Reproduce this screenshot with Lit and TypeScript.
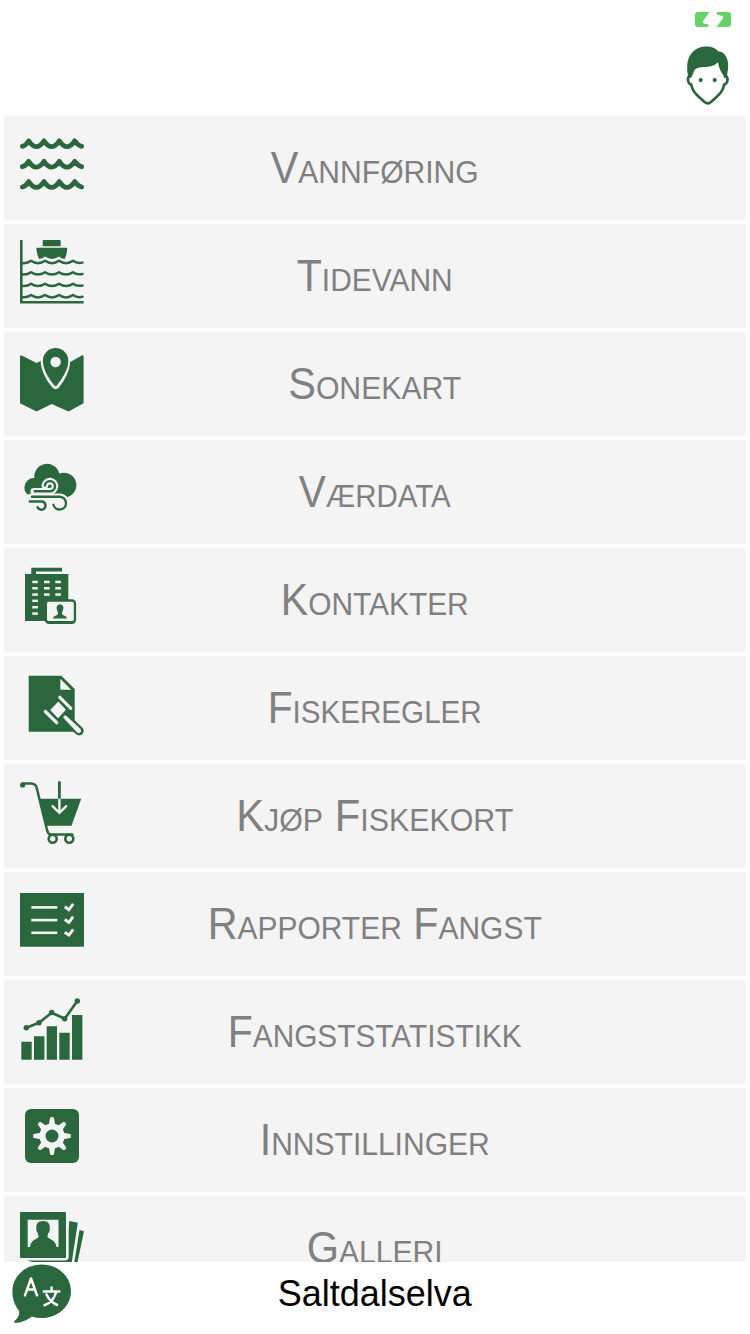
import { LitElement, html, css, svg } from "lit";
import { customElement, property } from "lit/decorators.js";

const wave = (y: number) =>
  svg`<path class="line" stroke-width="4.8" d="M2.4 ${y + 5.4} Q6 ${y + 4.6} 8.7 ${y} Q16.4 ${y + 11.6} 24 ${y} Q31.7 ${y + 11.6} 39.3 ${y} Q47 ${y + 11.6} 54.7 ${y} Q58 ${y + 4.6} 61.6 ${y + 5.4}"/>`;
const ripple = (y: number) =>
  svg`<path class="line" stroke-width="2.5" d="M2 ${y + 2.2} Q7 ${y + 3} 11 ${y} Q18 ${y + 4.8} 25 ${y} Q32 ${y + 4.8} 39 ${y} Q46 ${y + 4.8} 53 ${y} Q57 ${y + 3} 62.5 ${y + 1.8}"/>`;
const windows = [
  ...[16.7, 23, 29.3, 35.6, 42, 48.3].map((y) => [12.3, y]),
  ...[16.7, 23, 29.3].flatMap((y) => [[24, y], [35.3, y]]),
];
const tooth = "M28.8 21 L30.1 13.6 Q32 12.4 33.9 13.6 L35.2 21Z";

const icons: Record<string, unknown> = {
  waves: svg`${[8.9, 29.3, 49.6].map(wave)}`,
  tide: svg`<path d="M0 0H2.6V61H63.7V63.5H0Z"/><rect x="22.7" y="0" width="18" height="6.2" rx="1"/>
    <path d="M17 7.7H46.4Q47.4 7.7 47.2 9C47 13 46 16.5 44.6 19Q41 18.7 39 16.6Q32 21.2 25 16.6Q22.5 18.7 19.2 19Q17 15 16.4 9Q16.2 7.7 17 7.7Z"/>
    ${[20.8, 32.2, 43.7, 55].map(ripple)}`,
  map: svg`<path d="M0 8.7Q0 6.9 1.7 7.6L16.5 15L31.7 7.4L48.5 15L61.8 7.6Q63.6 6.8 63.6 8.4V55.3L48.5 63.4L31.7 56L16.5 63.4L0 55.3Z"/>
    <path class="bg" d="M22 0H50V14C50 22 45 32 38.8 39.5Q35.6 43 32.4 39.5C26 32 20.7 22 20.7 13Z"/>
    <path d="M35.6 0A12.7 12.7 0 0 1 48.3 12.7C48.3 22 42 30.5 37 37.2Q35.6 39 34.2 37.2C29 30.5 22.9 22 22.9 12.7A12.7 12.7 0 0 1 35.6 0Z"/><circle class="bg" cx="35.6" cy="14" r="5.2"/>`,
  weather: svg`<path d="M13.3 41A9.5 9.5 0 1 1 14.4 22A12.7 12.7 0 0 1 39.4 17.7A12.2 12.2 0 1 1 48.6 40.6L43 43H13Z"/>
    <path class="cut" stroke-width="6.6" d="M13.8 35.3H29.6A5.1 5.1 0 1 0 24.8 29.6"/>
    <path class="cut" stroke-width="6.6" d="M11 40.7H40A6.4 6.4 0 1 1 33.4 48.8"/>
    <path class="line" stroke-width="2.4" d="M14.7 35.3H29.6A5.1 5.1 0 1 0 24.9 29.5"/>
    <path class="line" stroke-width="2.4" d="M12 40.7H40A6.4 6.4 0 1 1 33.4 48.8M9.8 45.5H21.2A4.1 4.1 0 1 1 17.6 51.2"/>`,
  contacts: svg`<path d="M5 10H11.3V3.8H42V7.6H16V10H48.3V57H5Z"/>
    ${windows.map(([x, y]) => svg`<rect class="bg" x=${x} y=${y} width="5.6" height="2.5"/>`)}
    <rect x="24.7" y="35.3" width="31.4" height="24.6" rx="4.2"/><rect class="bg" x="27" y="37.7" width="26.8" height="19.4" rx="1.6"/>
    <path d="M40 40.5C43.2 40.5 44 43 43 46C42.6 47.4 42 48.2 42 50C43 51.8 46.5 51.6 47 54.6H33C33.5 51.6 37 51.8 38 50C38 48.2 37.4 47.4 37 46C36 43 36.8 40.5 40 40.5Z"/>`,
  rules: svg`<path d="M8.7 3.7H41.3L54.7 17V59.7H8.7Z"/><path class="bg" d="M40.3 6.8L51.2 17.8H40.3Z"/>
    <path class="line" stroke-width="9.2" d="M52 52L59.1 58.8"/><path class="bg" d="M38.3 29.5L46 37.7L38 46.2L30.2 38Z"/>
    <path class="cut" stroke-width="3.2" d="M39.8 25.3L50.8 36.4M25.3 39.5L36.7 50.7"/>
    <path class="bg" d="M43.3 45.8Q43.3 43.2 45.9 43.6L60.4 56.8Q62 59 60.3 60.5Q58.4 61.9 56.7 60.1Z"/>`,
  cart: svg`<path d="M20 18.7H61.2L51.5 45.7H26.6Z"/><circle cx="2.6" cy="5" r="2.6"/>
    <path class="line" stroke-width="2.5" d="M2.5 3.6H11.5Q15.7 3.8 16.8 8.2L26.7 48.5Q27.6 54.5 31 54.5H52.3"/>
    <circle class="ring" cx="32.7" cy="58.7" r="4"/><circle class="ring" cx="49.3" cy="58.7" r="4"/>
    <path class="line" stroke-width="2.8" d="M39.4 2.5V17.5"/><path class="cut" stroke-width="2.4" d="M39.4 20V33L32.6 26.2M39.4 33L46.2 26.2"/>`,
  report: svg`<rect y="5" width="64" height="53.8" rx=".8"/>
    ${[19.4, 32.1, 44.8].map((y) => svg`<path class="cut square" stroke-width="2.6" d="M11.3 ${y}H37.3"/><path class="cut square" stroke-width="2.9" d="M44.8 ${y - 0.6}L48.9 ${y + 2.3}L53.2 ${y - 3.5}"/>`)}`,
  chart: svg`<path d="M1.3 45.7H11.7V63.7H1.3ZM14 40.3H24.4V63.7H14ZM26.7 30.3H37V63.7H26.7ZM39.3 36.7H49.7V63.7H39.3ZM52 19H62.4V63.7H52Z"/>
    <path class="line" stroke-width="2.6" d="M6.3 31.7L19 26.7L31.7 16.7L44.7 22.7L57.3 5"/>
    ${[[6.3, 31.7], [19, 26.7], [31.7, 16.5], [44.7, 22.7], [57.3, 5]].map(([x, y]) => svg`<circle cx=${x} cy=${y} r="2.7"/>`)}`,
  settings: svg`<rect x="5" y="5" width="54" height="54" rx="6"/><circle class="bg" cx="32" cy="32" r="12.6"/>
    ${[0, 45, 90, 135, 180, 225, 270, 315].map((a) => svg`<path class="bg" transform="rotate(${a} 32 32)" d=${tooth}/>`)}
    <circle cx="32" cy="32" r="6.5"/>`,
  gallery: svg`<path fill-rule="evenodd" d="M1 0H45Q46 0 46 1V45Q46 46 45 46H1Q0 46 0 45V1Q0 0 1 0ZM7.7 7.7V35H38.5V7.7Z"/>
    <path d="M23 9C28 9 30.3 12 29.7 16.5Q30.3 19.5 28.3 21.3L27.4 25C29 27.5 36.5 27.8 36.5 36H10C10 27.8 17 27.5 18.8 25L17.8 21.3Q15.7 19.5 16.4 16.5C15.8 12 18 9 23 9Z"/>
    <path d="M7 48.4H45.5Q48.7 48 48.7 45V17L49.3 9L57.8 10.7L51.6 51H16ZM59.5 18L64 19.2L57.3 51H54.2Z"/>`,
};

interface Entry {
  label: string;
  icon: string;
  width: number;
}

const entries: Entry[] = [
  { label: "Vannføring", icon: "waves", width: 207 },
  { label: "Tidevann", icon: "tide", width: 155 },
  { label: "Sonekart", icon: "map", width: 172 },
  { label: "Værdata", icon: "weather", width: 151 },
  { label: "Kontakter", icon: "contacts", width: 187 },
  { label: "Fiskeregler", icon: "rules", width: 213 },
  { label: "Kjøp Fiskekort", icon: "cart", width: 276 },
  { label: "Rapporter Fangst", icon: "report", width: 333 },
  { label: "Fangststatistikk", icon: "chart", width: 293 },
  { label: "Innstillinger", icon: "settings", width: 229 },
  { label: "Galleri", icon: "gallery", width: 135 },
];

@customElement("menu-row")
class MenuRow extends LitElement {
  @property({ attribute: false }) entry!: Entry;

  static styles = css`
    :host { display: grid; grid-template-columns: 64px 1fr 64px; height: 104px; padding: 0 16px; box-sizing: border-box; background: #f4f4f4; flex: none; }
    .icon { width: 64px; height: 64px; margin-top: 16px; fill: #2a673d; display: block; }
    .bg { fill: #f4f4f4; }
    .line, .ring { fill: none; stroke: #2a673d; stroke-linecap: round; stroke-linejoin: round; }
    .ring { stroke-width: 2.6; }
    .cut { fill: none; stroke: #f4f4f4; stroke-linecap: round; stroke-linejoin: round; }
    .square { stroke-linecap: butt; stroke-linejoin: miter; }
    .label { width: 100%; height: 104px; display: block; overflow: visible; font: 44px "Liberation Sans", Arial, sans-serif; fill: #808080; }
    .small { font-size: 32px; }
  `;

  render() {
    const { label, icon, width } = this.entry;
    return html`
      <svg class="icon" viewBox="0 0 64 64">${icons[icon]}</svg>
      <svg class="label" viewBox="0 0 582 104">
        <text x="290.7" y="67" text-anchor="middle" textLength=${width + 1} lengthAdjust="spacingAndGlyphs">${label
          .split(" ")
          .map((w, i) => svg`${i ? " " : ""}${w[0]}<tspan class="small">${w.slice(1).toUpperCase()}</tspan>`)}</text>
      </svg>`;
  }
}

@customElement("app-root")
class AppRoot extends LitElement {
  static styles = css`
    :host { display: flex; flex-direction: column; height: 1334px; width: 750px; overflow: hidden; background: #fff; font-family: "Liberation Sans", Arial, sans-serif; }
    .top { height: 116px; flex: none; display: flex; flex-direction: column; align-items: flex-end; }
    .battery { width: 36px; height: 15px; margin: 12px 19px 18px 0; display: block; }
    .avatar { width: 44px; height: 62px; margin-right: 20px; display: block; }
    .list { flex: 1; min-height: 0; overflow: hidden; padding: 0 4px; display: flex; flex-direction: column; gap: 4px; }
    .bottom { height: 72px; flex: none; display: grid; grid-template-columns: 84px 1fr 84px; }
    .lang { width: 84px; height: 72px; display: block; }
    .title { width: 582px; height: 72px; display: block; font-size: 36px; fill: #000; }
    .green { fill: #2a673d; }
    .stroke { fill: none; stroke: #2a673d; stroke-width: 2.7; stroke-linejoin: round; }
    .charge { fill: #65d167; }
    .glyph { fill: none; stroke: #fff; stroke-width: 2.5; stroke-linecap: round; stroke-linejoin: round; }
  `;

  render() {
    return html`
      <header class="top">
        <svg class="battery" viewBox="0 0 36 15">
          <path class="charge" d="M3 0H14.5L8 9Q7.5 11.7 10 11.8L13.5 12.5V15H3Q0 15 0 12V3Q0 0 3 0ZM22 0H33Q36 0 36 3V12Q36 15 33 15H21.5L28 6.5Q28.7 3.5 25.5 3.4L22 2.5Z"/>
        </svg>
        <svg class="avatar" viewBox="0 0 44 62">
          <path class="stroke" d="M3.2 31C1.2 33 1.5 38.5 5.2 39.6C6.4 45.5 9.2 49 13 52L18.5 57Q21.8 59.6 25 57L30.5 52C34.3 49 37 45.5 38.2 39.6C42 38.5 42.3 33 40.2 31"/>
          <path class="green" d="M2.5 33Q.5 26 1.3 19C2.5 8 10 1.4 20 1.4C26.2 1.4 29.5 3.2 32.3 6.3C39 6.7 43.3 14.5 42 24L40.6 33H38.4L36.8 29.5C34.5 26.5 32.7 22 32 17.2Q29 20.7 24 21.6C18 22.6 12.3 21.3 8.5 25C7.2 27.3 7.3 30 4.8 33Z"/>
          <circle class="green" cx="14.7" cy="35.1" r="2.1"/><circle class="green" cx="28.7" cy="35.1" r="2.1"/>
        </svg>
      </header>
      <main class="list">${entries.map((e) => html`<menu-row .entry=${e}></menu-row>`)}</main>
      <footer class="bottom">
        <svg class="lang" viewBox="0 0 84 72">
          <path class="green" d="M41.7 2.5C58 2.5 71 14.5 71 29.2S58 56 41.7 56Q36.5 56 31.8 54.4C27 58.5 20 61 14.5 60.7Q13.5 60 15 58.6C18.7 55.5 20 51.5 18.8 48.2C14.7 43.5 12.4 36.5 12.4 29.2C12.4 14.5 25.3 2.5 41.7 2.5Z"/>
          <path class="glyph" d="M25 33.3L31 16.5L37 33.3M27 27.6H35M43.8 29.5H59.3M51.6 25.6V29.2M46.5 32.5Q49.5 39.5 57 43M56 30.5Q53.5 40 44.5 43.2"/>
        </svg>
        <svg class="title" viewBox="0 0 582 72"><text x="290.7" y="44.4" text-anchor="middle" textLength="194" lengthAdjust="spacingAndGlyphs">Saltdalselva</text></svg>
      </footer>`;
  }
}
